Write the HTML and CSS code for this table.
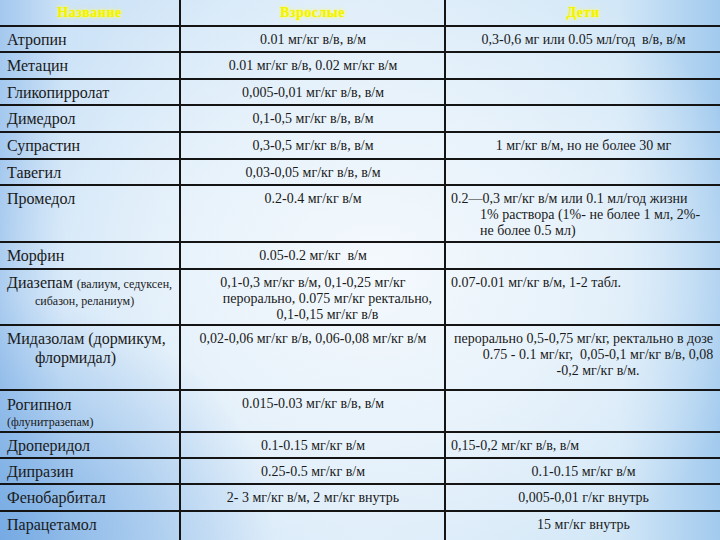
FILE: index.html
```html
<!DOCTYPE html>
<html lang="ru">
<head>
<meta charset="utf-8">
<title>Дозировки препаратов</title>
<link rel="stylesheet" href="styles.css">
</head>
<body>
<div class="slide">
<table class="doses">
  <colgroup><col class="c1"><col class="c2"><col class="c3"></colgroup>
  <thead>
    <tr class="h-head"><th>Название</th><th>Взрослые</th><th>Дети</th></tr>
  </thead>
  <tbody>
    <tr class="h26"><td class="name">Атропин</td><td class="mid">0.01 мг/кг в/в, в/м</td><td class="mid">0,3-0,6 мг или 0.05 мл/год&nbsp; в/в, в/м</td></tr>
    <tr class="h27"><td class="name">Метацин</td><td class="mid">0.01 мг/кг в/в, 0.02 мг/кг в/м</td><td></td></tr>
    <tr class="h26"><td class="name">Гликопирролат</td><td class="mid">0,005-0,01 мг/кг в/в, в/м</td><td></td></tr>
    <tr class="h27"><td class="name">Димедрол</td><td class="mid">0,1-0,5 мг/кг в/в, в/м</td><td></td></tr>
    <tr class="h27"><td class="name">Супрастин</td><td class="mid">0,3-0,5 мг/кг в/в, в/м</td><td class="mid">1 мг/кг в/м, но не более 30 мг</td></tr>
    <tr class="h26"><td class="name">Тавегил</td><td class="mid">0,03-0,05 мг/кг в/в, в/м</td><td></td></tr>
    <tr class="h57"><td class="name">Промедол</td><td class="mid">0.2-0.4 мг/кг в/м</td><td class="left">0.2—0,3 мг/кг в/м или 0.1 мл/год жизни<br>1% раствора (1%- не более 1 мл, 2%-<br>не более 0.5 мл)</td></tr>
    <tr class="h27"><td class="name">Морфин</td><td class="mid">0.05-0.2 мг/кг&nbsp; в/м</td><td></td></tr>
    <tr class="h56"><td class="name tight">Диазепам <small>(валиум, седуксен,<br>сибазон, реланиум)</small></td><td class="mid">0,1-0,3 мг/кг в/м, 0,1-0,25 мг/кг<br>перорально, 0.075 мг/кг ректально,<br>0,1-0,15 мг/кг в/в</td><td class="left">0.07-0.01 мг/кг в/м, 1-2 табл.</td></tr>
    <tr class="h65"><td class="name">Мидазолам (дормикум,<br>флормидал)</td><td class="mid">0,02-0,06 мг/кг в/в, 0,06-0,08 мг/кг в/м</td><td class="mid">перорально 0,5-0,75 мг/кг, ректально в дозе<br>0.75 - 0.1 мг/кг,&nbsp; 0,05-0,1 мг/кг в/в, 0,08<br>-0,2 мг/кг в/м.</td></tr>
    <tr class="h42"><td class="name tight rog">Рогипнол<br><small>(флунитразепам)</small></td><td class="mid">0.015-0.03 мг/кг в/в, в/м</td><td></td></tr>
    <tr class="h26"><td class="name">Дроперидол</td><td class="mid">0.1-0.15 мг/кг в/м</td><td class="left">0,15-0,2 мг/кг в/в, в/м</td></tr>
    <tr class="h26"><td class="name">Дипразин</td><td class="mid">0.25-0.5 мг/кг в/м</td><td class="mid">0.1-0.15 мг/кг в/м</td></tr>
    <tr class="h27"><td class="name">Фенобарбитал</td><td class="mid">2- 3 мг/кг в/м, 2 мг/кг внутрь</td><td class="mid">0,005-0,01 г/кг внутрь</td></tr>
    <tr class="h30"><td class="name">Парацетамол</td><td></td><td class="mid">15 мг/кг внутрь</td></tr>
  </tbody>
</table>
</div>
</body>
</html>
```

FILE: styles.css
```css
html, body {
  margin: 0;
  padding: 0;
}
body {
  width: 720px;
  height: 540px;
  overflow: hidden;
}
.slide {
  width: 720px;
  height: 540px;
  overflow: hidden;
  background-color: #cfe4f7;
  background-image:
    radial-gradient(ellipse 38% 45% at 0% 100%, rgba(110, 165, 225, 0.85) 0%, rgba(110, 165, 225, 0) 100%),
    radial-gradient(ellipse 55% 62% at 52% 50%, #f4f9fd 0%, #e9f3fb 45%, rgba(225, 239, 250, 0) 100%),
    linear-gradient(to right, #a4c8ee 0%, #cde3f7 9%, #dcecf9 50%, #d2e7f7 86%, #a2caee 100%);
  font-family: "Liberation Serif", "Times New Roman", serif;
  color: #1a1a1a;
}
.doses {
  width: 720px;
  border-collapse: collapse;
  border-style: hidden;
  table-layout: fixed;
}
.c1 { width: 180px; }
.c2 { width: 265px; }
.c3 { width: 275px; }
.doses th,
.doses td {
  border: 2px solid #141414;
  vertical-align: top;
  padding: 0;
}
.doses th {
  font-size: 14px;
  font-weight: bold;
  line-height: 16px;
  padding-top: 5px;
  color: #f2f200;
  text-shadow: 0 0 2px #ffff40, 0 0 4px rgba(255, 255, 140, 0.9);
  letter-spacing: 0.5px;
}
/* hanging-indent paragraphs, as in the source slide */
.doses td {
  font-size: 14px;
  line-height: 16px;
  padding: 5px 4px 0 34px;
  text-indent: -29px;
}
.doses td.name {
  font-size: 16px;
  line-height: 19px;
  padding: 3px 4px 0 35px;
  text-indent: -28px;
}
.doses td.name small {
  font-size: 12px;
}
.doses td.name.tight {
  line-height: 16px;
  padding-top: 5px;
}
.doses td.name.rog {
  padding-left: 7px;
  text-indent: 0;
  padding-top: 6px;
}
.mid { text-align: center; }
.left { text-align: left; }
.h-head { height: 26px; }
.h26 { height: 26px; }
.h27 { height: 27px; }
.h30 { height: 30px; }
.h42 { height: 42px; }
.h56 { height: 56px; }
.h57 { height: 57px; }
.h65 { height: 65px; }
```
